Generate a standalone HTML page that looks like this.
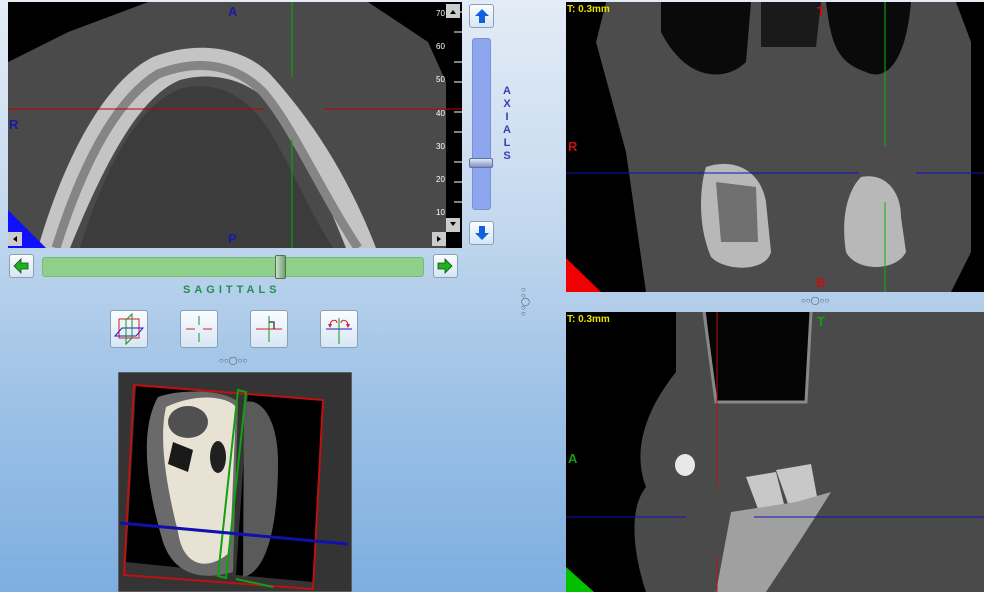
<!DOCTYPE html>
<html><head><meta charset="utf-8"><style>
*{margin:0;padding:0;box-sizing:border-box}
body{width:984px;height:592px;overflow:hidden;position:relative;font-family:"Liberation Sans",sans-serif;
background:linear-gradient(180deg,#e3ecf6 0%,#c6daef 35%,#a0c3e7 65%,#7daee0 100%);}
.abs{position:absolute}
.btn{position:absolute;border:1px solid #8aa0b8;border-radius:3px;background:linear-gradient(#fbfdff,#d6e6f4);}
.lbl{position:absolute;font-weight:bold;font-size:13px}
.tt{position:absolute;color:#e8e000;font-size:10px;font-weight:bold}
</style></head><body>

<!-- top-left axial -->
<svg class="abs" style="left:8px;top:2px" width="454" height="246" viewBox="0 0 454 246">
<rect width="454" height="246" fill="#000"/>
<path d="M0 60 L60 30 L140 0 L360 0 L420 40 L438 80 L438 246 L0 246Z" fill="#4a4a4a"/>
<path d="M0 0 L140 0 L60 30 L0 60Z" fill="#000"/>
<path d="M30 246 C55 160 95 80 145 55 C190 38 235 45 262 72 C292 105 335 160 368 246 L338 246 C310 175 285 125 258 98 C235 75 200 70 172 78 C130 95 95 165 62 246Z" fill="#c4c4c4"/>
<path d="M48 246 C72 170 105 100 150 72 C195 55 230 65 255 90 C285 125 310 185 350 246" fill="none" stroke="#858585" stroke-width="9"/>
<path d="M72 246 C95 170 130 100 175 86 C215 78 245 98 268 140 C290 180 305 215 325 246Z" fill="#3c3c3c"/>
<rect x="438" y="0" width="16" height="246" fill="#000"/>
<g stroke="#fff" stroke-width="1">
<line x1="446" y1="10" x2="454" y2="10"/><line x1="446" y1="60" x2="454" y2="60"/><line x1="446" y1="110" x2="454" y2="110"/><line x1="446" y1="160" x2="454" y2="160"/><line x1="446" y1="200" x2="454" y2="200"/><line x1="446" y1="30" x2="454" y2="30"/><line x1="446" y1="80" x2="454" y2="80"/><line x1="446" y1="130" x2="454" y2="130"/><line x1="446" y1="180" x2="454" y2="180"/>
</g>
<g fill="#fff" font-size="8" font-family="Liberation Sans">
<text x="428" y="14">70</text><text x="428" y="47">60</text><text x="428" y="80">50</text><text x="428" y="114">40</text><text x="428" y="147">30</text><text x="428" y="180">20</text><text x="428" y="213">10</text></g>
<line x1="0" y1="107" x2="257" y2="107" stroke="#c00000"/><line x1="317" y1="107" x2="454" y2="107" stroke="#c00000"/>
<line x1="284" y1="0" x2="284" y2="75" stroke="#00b000"/><line x1="284" y1="138" x2="284" y2="246" stroke="#00b000"/>
<path d="M0 208 L0 246 L38 246Z" fill="#1010ff"/>
<rect x="438" y="2" width="14" height="14" fill="#ccc"/><rect x="438" y="216" width="14" height="14" fill="#ccc"/>
<rect x="0" y="230" width="14" height="14" fill="#ccc"/><rect x="424" y="230" width="14" height="14" fill="#ccc"/>
<path d="M442 12 l3 -4 l3 4z M442 220 l3 4 l3 -4z M9 234 l-4 3 l4 3z M429 234 l4 3 l-4 3z" fill="#000"/>
</svg>
<div class="lbl" style="left:228px;top:4px;color:#1a1aa0">A</div>
<div class="lbl" style="left:228px;top:231px;color:#1a1aa0">P</div>
<div class="lbl" style="left:9px;top:117px;color:#1a1aa0">R</div>

<!-- axial slider -->
<div class="btn" style="left:469px;top:4px;width:25px;height:24px"></div>
<svg class="abs" style="left:474px;top:8px" width="16" height="16"><path d="M8 1 L15 8 L11 8 L11 15 L5 15 L5 8 L1 8Z" fill="#1060e0"/></svg>
<div class="abs" style="left:472px;top:38px;width:19px;height:172px;background:#8ea6ee;border:1px solid #7a90d8;border-radius:3px"></div>
<div class="abs" style="left:469px;top:158px;width:24px;height:10px;background:linear-gradient(#e0e8f8,#8090c0);border:1px solid #6070a0;border-radius:2px"></div>
<div class="btn" style="left:469px;top:221px;width:25px;height:24px"></div>
<svg class="abs" style="left:474px;top:225px" width="16" height="16"><path d="M8 15 L15 8 L11 8 L11 1 L5 1 L5 8 L1 8Z" fill="#1060e0"/></svg>
<div class="abs" style="left:501px;top:85px;width:12px;color:#3840b0;font-size:11px;font-weight:bold;line-height:13px;text-align:center">A<br>X<br>I<br>A<br>L<br>S</div>

<!-- sagittal slider -->
<div class="btn" style="left:9px;top:254px;width:25px;height:24px"></div>
<svg class="abs" style="left:13px;top:258px" width="16" height="16"><path d="M1 8 L8 1 L8 5 L15 5 L15 11 L8 11 L8 15Z" fill="#20b020" stroke="#105010" stroke-width=".8"/></svg>
<div class="abs" style="left:42px;top:257px;width:382px;height:20px;background:#8ed08a;border:1px solid #78b878;border-radius:3px"></div>
<div class="abs" style="left:275px;top:255px;width:11px;height:24px;background:linear-gradient(90deg,#c8e0c8,#70a070);border:1px solid #507050;border-radius:2px"></div>
<div class="btn" style="left:433px;top:254px;width:25px;height:24px"></div>
<svg class="abs" style="left:437px;top:258px" width="16" height="16"><path d="M15 8 L8 1 L8 5 L1 5 L1 11 L8 11 L8 15Z" fill="#20b020" stroke="#105010" stroke-width=".8"/></svg>
<div class="abs" style="left:183px;top:284px;color:#20904a;font-size:11px;font-weight:bold;letter-spacing:4px">SAGITTALS</div>

<!-- icons -->
<div class="btn" style="left:110px;top:310px;width:38px;height:38px"></div>
<svg class="abs" style="left:110px;top:310px" width="38" height="38"><rect x="9" y="9" width="20" height="19" fill="none" stroke="#d02020"/><path d="M5 26 L12 18 L33 18 L26 26Z" fill="none" stroke="#2020c0"/><path d="M16 34 L16 10 L22 4 L22 28Z" fill="none" stroke="#209020"/></svg>
<div class="btn" style="left:180px;top:310px;width:38px;height:38px"></div>
<svg class="abs" style="left:180px;top:310px" width="38" height="38"><path d="M6 19h9M23 19h9" stroke="#d02020"/><path d="M19 6v9M19 23v9" stroke="#209020"/></svg>
<div class="btn" style="left:250px;top:310px;width:38px;height:38px"></div>
<svg class="abs" style="left:250px;top:310px" width="38" height="38"><path d="M6 19h26" stroke="#d02020"/><path d="M19 6v26" stroke="#209020"/><path d="M19 12h5v7" stroke="#000" fill="none"/></svg>
<div class="btn" style="left:320px;top:310px;width:38px;height:38px"></div>
<svg class="abs" style="left:320px;top:310px" width="38" height="38"><path d="M6 19h26" stroke="#2020c0"/><path d="M19 8v26" stroke="#209020"/><path d="M10 16 C10 9 17 9 17 13 M28 16 C28 9 21 9 21 13" stroke="#d02020" fill="none"/><path d="M8 14l2 4 2-4zM26 14l2 4 2-4z" fill="#d02020"/></svg>

<div class="abs" style="left:219px;top:356px;font-size:8px;color:#456">○○◯○○</div>
<div class="abs" style="left:521px;top:287px;font-size:8px;color:#456;line-height:6px;width:8px">○<br>○<br>◯<br>○<br>○</div>
<div class="abs" style="left:801px;top:296px;font-size:8px;color:#456">○○◯○○</div>

<!-- 3D -->
<svg class="abs" style="left:118px;top:372px" width="234" height="220">
<rect width="234" height="220" fill="#343434" stroke="#888"/>
<path d="M18 13 L80 18 L76 197 L8 190Z" fill="#000"/>
<path d="M130 22 L205 28 L195 210 L118 203Z" fill="#000"/>
<path d="M40 25 C70 15 110 20 120 30 L115 200 C80 210 55 200 45 170 C30 120 20 60 40 25Z" fill="#6a6a6a"/>
<path d="M48 35 C80 20 110 25 118 35 L112 180 C90 200 65 195 60 160 C50 120 40 70 48 35Z" fill="#e8e2d4"/>
<ellipse cx="70" cy="50" rx="20" ry="16" fill="#505050"/>
<ellipse cx="100" cy="85" rx="8" ry="16" fill="#202020"/>
<path d="M55 70 L75 78 L70 100 L50 92Z" fill="#1a1a1a"/>
<path d="M126 30 C145 25 160 50 160 90 C160 150 150 200 125 205Z" fill="#5a5a5a"/>
<path d="M16 13 L205 28 L195 217 L6 203Z" fill="none" stroke="#c01010" stroke-width="2"/>
<path d="M120 18 L128 20 L108 206 L100 204Z" fill="none" stroke="#10a010" stroke-width="2"/>
<line x1="118" y1="207" x2="155" y2="215" stroke="#10a010" stroke-width="2"/>
<line x1="2" y1="151" x2="230" y2="172" stroke="#1010b0" stroke-width="3"/>
</svg>

<!-- right top coronal -->
<svg class="abs" style="left:566px;top:2px" width="418" height="290">
<rect width="418" height="290" fill="#000"/>
<path d="M40 0 L390 0 L405 40 L405 250 L385 290 L30 290 L0 220 L0 120 L30 40Z" fill="#4c4c4c"/>
<path d="M0 0 L40 0 L30 40 L60 150 L80 290 L0 290Z" fill="#000"/>
<path d="M418 0 L418 290 L390 290 L405 250 L405 40 L395 0Z" fill="#000"/>
<path d="M95 0 L185 0 L180 60 C160 80 120 80 95 30Z" fill="#0a0a0a"/>
<path d="M260 0 L345 0 C340 60 320 80 300 70 C270 60 265 40 260 0Z" fill="#0a0a0a"/>
<path d="M195 0 L255 0 L250 45 L195 45Z" fill="#1a1a1a"/>
<path d="M140 165 C170 155 195 170 200 200 L205 250 C200 270 160 270 145 255 C130 220 135 180 140 165Z" fill="#b8b8b8"/>
<path d="M295 175 C320 170 335 190 335 215 L340 250 C330 270 290 270 280 250 C275 220 280 190 295 175Z" fill="#b8b8b8"/>
<path d="M150 180 L190 185 L192 240 L155 240Z" fill="#707070"/>
<line x1="0" y1="171" x2="293" y2="171" stroke="#1010c0"/><line x1="350" y1="171" x2="418" y2="171" stroke="#1010c0"/>
<line x1="319" y1="0" x2="319" y2="145" stroke="#10b010"/><line x1="319" y1="200" x2="319" y2="290" stroke="#10b010"/>
<path d="M0 256 L0 290 L35 290Z" fill="#f00000"/>
</svg>
<div class="tt" style="left:567px;top:4px">T: 0.3mm</div>
<div class="lbl" style="left:817px;top:4px;color:#c01010">T</div>
<div class="lbl" style="left:816px;top:275px;color:#c01010">B</div>
<div class="lbl" style="left:568px;top:139px;color:#c01010">R</div>

<!-- right bottom sagittal -->
<svg class="abs" style="left:566px;top:312px" width="418" height="280">
<rect width="418" height="280" fill="#000"/>
<path d="M110 0 L418 0 L418 280 L80 280 C70 250 60 200 80 175 C70 150 70 110 110 60Z" fill="#4a4a4a"/>
<path d="M140 0 L245 0 L240 90 L150 90Z" fill="#050505"/>
<path d="M138 0 L150 90 L240 90 L245 0" fill="none" stroke="#888" stroke-width="3"/>
<ellipse cx="119" cy="153" rx="10" ry="11" fill="#e8e8e8"/>
<path d="M180 165 L210 160 L220 200 L195 205Z" fill="#c8c8c8"/>
<path d="M210 158 L245 152 L252 190 L225 200Z" fill="#c8c8c8"/>
<path d="M150 280 L165 200 L230 190 L265 180 C240 220 220 250 200 280Z" fill="#a0a0a0"/>
<line x1="0" y1="205" x2="120" y2="205" stroke="#1010c0"/><line x1="188" y1="205" x2="418" y2="205" stroke="#1010c0"/>
<line x1="151" y1="0" x2="151" y2="175" stroke="#c01010"/><line x1="151" y1="245" x2="151" y2="280" stroke="#c01010"/>
<path d="M0 255 L0 280 L28 280Z" fill="#00c000"/>
</svg>
<div class="tt" style="left:567px;top:314px">T: 0.3mm</div>
<div class="lbl" style="left:817px;top:314px;color:#10a010">T</div>
<div class="lbl" style="left:568px;top:451px;color:#10a010">A</div>
</body></html>
